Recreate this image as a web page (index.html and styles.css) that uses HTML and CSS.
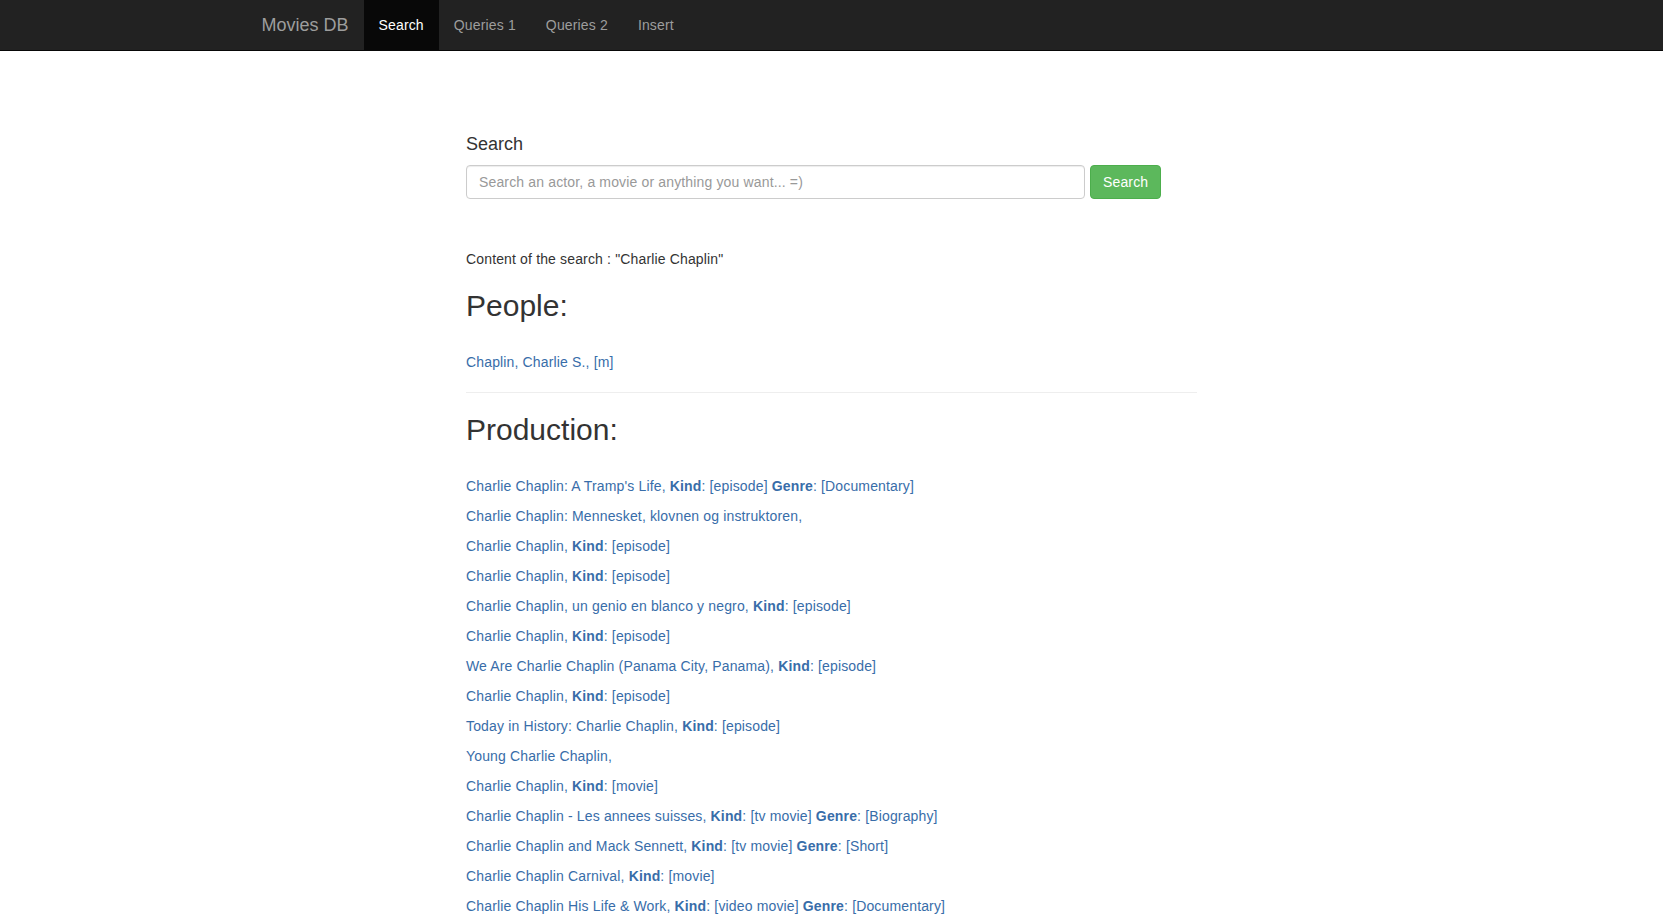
FILE: index.html
```html
<!DOCTYPE html>
<html lang="en">
<head>
<meta charset="utf-8">
<title>Movies DB</title>
<link rel="stylesheet" href="styles.css">
</head>
<body>
<nav class="navbar">
  <div class="nav-container">
    <a class="brand" href="#">Movies DB</a>
    <ul class="nav">
      <li class="active"><a href="#">Search</a></li>
      <li><a href="#">Queries 1</a></li>
      <li><a href="#">Queries 2</a></li>
      <li><a href="#">Insert</a></li>
    </ul>
  </div>
</nav>
<main class="main">
  <label class="search-label" for="q">Search</label>
  <form class="search-form">
    <input id="q" class="search-input" type="text" placeholder="Search an actor, a movie or anything you want... =)">
    <button class="btn-success" type="button">Search</button>
  </form>
  <p class="query">Content of the search : "Charlie Chaplin"</p>
  <h2 class="section-title">People:</h2>
  <p class="item"><a href="#">Chaplin, Charlie S., [m]</a></p>
  <hr class="divider">
  <h2 class="section-title">Production:</h2>
  <div class="list">
    <p class="item"><a href="#">Charlie Chaplin: A Tramp's Life, <b>Kind</b>: [episode] <b>Genre</b>: [Documentary]</a></p>
    <p class="item"><a href="#">Charlie Chaplin: Mennesket, klovnen og instruktoren, </a></p>
    <p class="item"><a href="#">Charlie Chaplin, <b>Kind</b>: [episode]</a></p>
    <p class="item"><a href="#">Charlie Chaplin, <b>Kind</b>: [episode]</a></p>
    <p class="item"><a href="#">Charlie Chaplin, un genio en blanco y negro, <b>Kind</b>: [episode]</a></p>
    <p class="item"><a href="#">Charlie Chaplin, <b>Kind</b>: [episode]</a></p>
    <p class="item"><a href="#">We Are Charlie Chaplin (Panama City, Panama), <b>Kind</b>: [episode]</a></p>
    <p class="item"><a href="#">Charlie Chaplin, <b>Kind</b>: [episode]</a></p>
    <p class="item"><a href="#">Today in History: Charlie Chaplin, <b>Kind</b>: [episode]</a></p>
    <p class="item"><a href="#">Young Charlie Chaplin, </a></p>
    <p class="item"><a href="#">Charlie Chaplin, <b>Kind</b>: [movie]</a></p>
    <p class="item"><a href="#">Charlie Chaplin - Les annees suisses, <b>Kind</b>: [tv movie] <b>Genre</b>: [Biography]</a></p>
    <p class="item"><a href="#">Charlie Chaplin and Mack Sennett, <b>Kind</b>: [tv movie] <b>Genre</b>: [Short]</a></p>
    <p class="item"><a href="#">Charlie Chaplin Carnival, <b>Kind</b>: [movie]</a></p>
    <p class="item"><a href="#">Charlie Chaplin His Life &amp; Work, <b>Kind</b>: [video movie] <b>Genre</b>: [Documentary]</a></p>
  </div>
</main>
</body>
</html>
```
FILE: styles.css
```css
* { box-sizing: border-box; }

html, body {
  margin: 0;
  padding: 0;
}

body {
  font-family: "Liberation Sans", Arial, Helvetica, sans-serif;
  font-size: 14px;
  line-height: 20px;
  letter-spacing: 0.15px;
  color: #333;
  background: #fff;
}

a { text-decoration: none; }

.navbar {
  background: #222;
  border-bottom: 1px solid #080808;
  height: 51px;
}

.nav-container {
  width: 1170px;
  margin: 0 auto;
  padding: 0 15px;
  display: flex;
  height: 50px;
}

.brand {
  display: block;
  height: 50px;
  padding: 15px;
  margin-left: -15px;
  font-size: 18px;
  line-height: 20px;
  letter-spacing: 0;
  color: #9d9d9d;
}

.nav {
  list-style: none;
  margin: 0;
  padding: 0;
  display: flex;
}

.nav a {
  display: block;
  padding: 15px;
  line-height: 20px;
  color: #9d9d9d;
}

.nav .active a {
  background: #080808;
  color: #fff;
}

.main {
  width: 731px;
  margin: 0 auto;
  padding-top: 83px;
}

.search-label {
  display: block;
  font-size: 18px;
  line-height: 20px;
  letter-spacing: 0;
  margin-bottom: 11px;
}

.search-form {
  display: flex;
  gap: 5px;
  margin: 0;
}

.search-input {
  width: 619px;
  height: 34px;
  padding: 6px 12px;
  font-family: inherit;
  font-size: 14px;
  line-height: 20px;
  letter-spacing: 0.15px;
  color: #555;
  border: 1px solid #ccc;
  border-radius: 4px;
  box-shadow: inset 0 1px 1px rgba(0,0,0,.075);
  outline: none;
}

.search-input::placeholder { color: #999; }

.btn-success {
  height: 34px;
  padding: 6px 12px;
  font-family: inherit;
  font-size: 14px;
  line-height: 20px;
  letter-spacing: 0.15px;
  color: #fff;
  background: #5cb85c;
  border: 1px solid #4cae4c;
  border-radius: 4px;
  cursor: pointer;
}

.query {
  margin: 50px 0 0;
}

.section-title {
  font-size: 30px;
  line-height: 33px;
  font-weight: 500;
  letter-spacing: 0;
  margin: 20px 0 30px;
}

.item {
  margin: 0 0 10px;
}

.item a { color: #386da9; }

.list .item:last-child { margin-bottom: 0; }

.divider {
  margin: 20px 0;
  border: 0;
  border-top: 1px solid #eee;
}
```
